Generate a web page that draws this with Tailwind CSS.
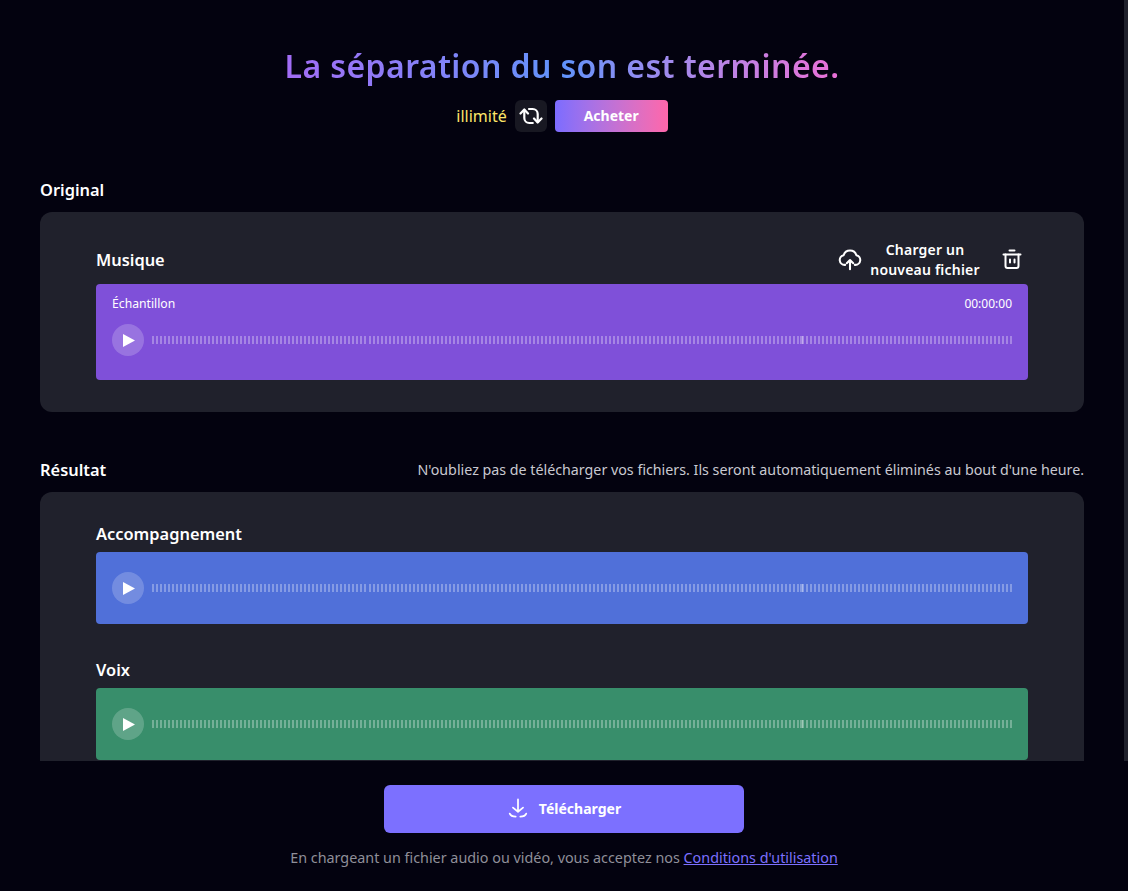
<!DOCTYPE html>
<html lang="fr">

<head>
    <meta charset="UTF-8">
    <meta name="viewport" content="width=device-width, initial-scale=1.0">
    <title>Séparation du son</title>
    <script src="https://cdn.jsdelivr.net/npm/@tailwindcss/browser@4"></script>
</head>

<body class="bg-[#03020f] font-['Noto_Sans',sans-serif] text-white overflow-hidden">
    <div class="flex flex-col h-[891px]">
        <!-- zone defilante -->
        <div class="relative h-[761px] overflow-hidden pr-1">
            <div class="px-10">
                <div class="flex flex-col items-center pt-[42px]">
                    <h1 class="h-[48px] leading-[48px] text-[32px] tracking-[0.4px] font-semibold text-transparent bg-clip-text bg-gradient-to-r from-[#a26cf5] via-[#5f93fb] to-[#ea6fd6]">La séparation du son est terminée.</h1>
                    <div class="flex items-center mt-[10px]">
                        <span class="text-base text-[#fde668]">illimité</span>
                        <button class="ml-2 w-8 h-8 rounded-md bg-[#181822] flex items-center justify-center">
                            <svg width="24" height="24" viewBox="0 0 24 24" fill="none" stroke="white" stroke-width="2.2" stroke-linecap="round" stroke-linejoin="round">
                                <path d="M5.300 6v8a5 5 0 0 0 5 5h3.500" />
                                <path d="M1.500 9.500 5.300 5.500 9 9.500" />
                                <path d="M18.700 18v-8a5 5 0 0 0-5-5H10" />
                                <path d="M15 14.500l3.700 4 3.800-4" />
                            </svg>
                        </button>
                        <button class="ml-2 w-[113px] h-8 rounded bg-gradient-to-r from-[#7c6cff] to-[#ff66aa] text-sm font-bold">Acheter</button>
                    </div>
                </div>

                <h2 class="mt-[46px] h-6 leading-6 text-[16.400px] font-semibold">Original</h2>
                <section class="mt-[10px] h-[200px] rounded-xl bg-[#20212c] px-14 pt-[27px]">
                    <div class="flex items-center justify-between h-[42px] mb-[3px] pr-1">
                        <h3 class="text-[16.400px] font-semibold">Musique</h3>
                        <div class="flex items-center">
                            <svg width="26" height="26" viewBox="0 0 24 24" fill="none" stroke="white" stroke-width="1.9" stroke-linecap="round" stroke-linejoin="round">
                                <path d="M7.500 16.500H7a4.500 4.500 0 0 1-.9-8.900 6.200 6.200 0 0 1 11.800 0 4.500 4.500 0 0 1-.9 8.900h-.5" />
                                <path d="M12 20.500V12M9 15l3-3 3 3" />
                            </svg>
                            <span class="ml-[7px] w-[110px] text-center text-sm tracking-[0.2px] font-semibold leading-[20px]">Charger un nouveau fichier</span>
                            <svg class="ml-5" width="24" height="24" viewBox="0 0 24 24" fill="none" stroke="white" stroke-width="2" stroke-linecap="round" stroke-linejoin="round">
                                <path d="M3.500 6.500h17M9.500 2.500h5" />
                                <path d="M5.500 6.500V18a2 2 0 0 0 2 2h9a2 2 0 0 0 2-2V6.500" />
                                <path d="M10 11.500v3M14.500 11.500v3" />
                            </svg>
                        </div>
                    </div>
                    <div class="h-[96px] rounded bg-[#7f50d9] px-4 pt-3">
                        <div class="flex justify-between h-4 leading-4 text-xs">
                            <span class="text-[12.200px]">Échantillon</span>
                            <span>00:00:00</span>
                        </div>
                        <div class="flex items-center mt-3 h-8">
                            <span class="w-8 h-8 rounded-full bg-white/20 flex items-center justify-center pl-[2px]">
                                <svg width="12" height="13" viewBox="0 0 12 13" fill="white"><path d="M0 0 12 6.500 0 13Z" /></svg>
                            </span>
                            <div class="relative ml-2 flex-1 h-2 bg-[repeating-linear-gradient(90deg,rgba(255,255,255,0.3)_0_2px,transparent_2px_4.0093px)]">
                                <span class="absolute left-[648px] top-0 w-[3px] h-2 bg-white/30"></span>
                            </div>
                        </div>
                    </div>
                </section>

                <div class="flex items-center justify-between mt-[46px] h-6">
                    <h2 class="text-[16.400px] font-semibold">Résultat</h2>
                    <p class="text-[14.260px] text-[#c9c9d1]">N'oubliez pas de télécharger vos fichiers. Ils seront automatiquement éliminés au bout d'une heure.</p>
                </div>
                <section class="mt-[10px] rounded-t-xl bg-[#20212c] px-14 pt-[30px] pb-4">
                    <h3 class="h-[24px] leading-6 text-[16.400px] font-semibold">Accompagnement</h3>
                    <div class="mt-[6px] flex items-center h-[72px] rounded bg-[#5070d9] px-4">
                        <span class="w-8 h-8 rounded-full bg-white/20 flex items-center justify-center pl-[2px]">
                            <svg width="12" height="13" viewBox="0 0 12 13" fill="white"><path d="M0 0 12 6.500 0 13Z" /></svg>
                        </span>
                        <div class="relative ml-2 flex-1 h-2 bg-[repeating-linear-gradient(90deg,rgba(255,255,255,0.3)_0_2px,transparent_2px_4.0093px)]">
                            <span class="absolute left-[648px] top-0 w-[3px] h-2 bg-white/30"></span>
                        </div>
                    </div>
                    <h3 class="mt-[34px] h-[24px] leading-6 text-[16.400px] font-semibold">Voix</h3>
                    <div class="mt-[6px] flex items-center h-[72px] rounded bg-[#388e6b] px-4">
                        <span class="w-8 h-8 rounded-full bg-white/20 flex items-center justify-center pl-[2px]">
                            <svg width="12" height="13" viewBox="0 0 12 13" fill="white"><path d="M0 0 12 6.500 0 13Z" /></svg>
                        </span>
                        <div class="relative ml-2 flex-1 h-2 bg-[repeating-linear-gradient(90deg,rgba(255,255,255,0.3)_0_2px,transparent_2px_4.0093px)]">
                            <span class="absolute left-[648px] top-0 w-[3px] h-2 bg-white/30"></span>
                        </div>
                    </div>
                </section>
            </div>
            <!-- barre de defilement -->
            <div class="absolute right-0 top-0 w-1 h-full bg-[#20212c]"></div>
        </div>

        <footer class="flex flex-col items-center pt-6">
            <button class="flex items-center justify-center w-[360px] h-12 rounded-md bg-[#7c70ff] text-sm font-bold">
                <svg width="22" height="22" viewBox="0 0 24 24" fill="none" stroke="white" stroke-width="1.9" stroke-linecap="round" stroke-linejoin="round">
                    <path d="M12 1.500V15M6.500 10.500 12 15l5.500-4.500" />
                    <path d="M3 17c.8 2 3.500 3.300 6.500 3.300M21 17c-.8 2-3.500 3.300-6.500 3.300" />
                </svg>
                <span class="ml-[10px]">Télécharger</span>
            </button>
            <p class="mt-[14px] text-[14.350px] text-[#8f8f99]">En chargeant un fichier audio ou vidéo, vous acceptez nos <a href="#" class="text-[#7c70ff] underline">Conditions d'utilisation</a></p>
        </footer>
    </div>
</body>

</html>
